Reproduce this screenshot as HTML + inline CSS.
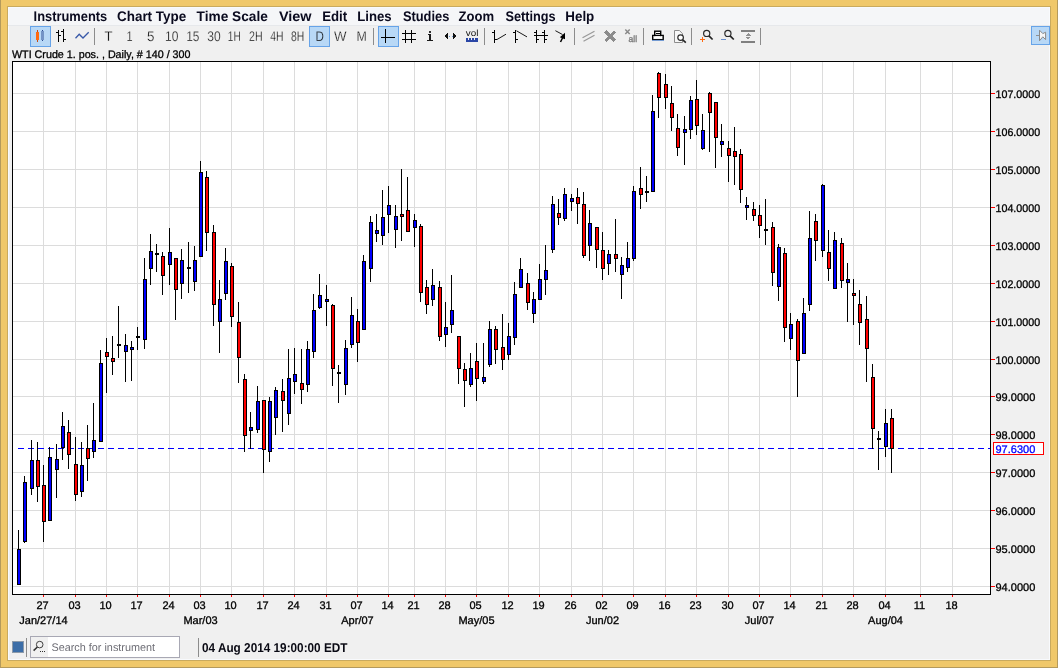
<!DOCTYPE html>
<html><head><meta charset="utf-8"><style>
html,body{margin:0;padding:0;width:1058px;height:668px;overflow:hidden;background:#F0C86A}
svg{display:block;will-change:transform}
</style></head><body>
<svg width="1058" height="668" viewBox="0 0 1058 668" font-family="Liberation Sans, sans-serif" shape-rendering="crispEdges" text-rendering="geometricPrecision">
<rect x="0" y="0" width="1058" height="668" fill="#F0C86A" />
<rect x="0" y="0" width="1" height="668" fill="#B49A5C" />
<rect x="1057" y="0" width="1" height="668" fill="#B49A5C" />
<rect x="0" y="667" width="1058" height="1" fill="#B49A5C" />
<rect x="7" y="6" width="1044" height="655" fill="#C9AA5E" />
<rect x="8" y="7" width="1042" height="653" fill="#F8FAFD" />
<rect x="9" y="8" width="1040" height="651" fill="#F0F0F0" />
<rect x="9" y="8" width="1040" height="17" fill="#F5F6F8" />
<rect x="8" y="25" width="1042" height="1" fill="#E6E8EB" />
<rect x="9" y="26" width="1040" height="22" fill="#F0F0F0" />
<text x="33.6" y="21" font-size="14" font-weight="bold" fill="#0A0A1E" textLength="73.60000000000001" lengthAdjust="spacingAndGlyphs" >Instruments</text>
<text x="117.0" y="21" font-size="14" font-weight="bold" fill="#0A0A1E" textLength="69.2" lengthAdjust="spacingAndGlyphs" >Chart Type</text>
<text x="196.6" y="21" font-size="14" font-weight="bold" fill="#0A0A1E" textLength="71.2" lengthAdjust="spacingAndGlyphs" >Time Scale</text>
<text x="278.90000000000003" y="21" font-size="14" font-weight="bold" fill="#0A0A1E" textLength="32.6" lengthAdjust="spacingAndGlyphs" >View</text>
<text x="322.20000000000005" y="21" font-size="14" font-weight="bold" fill="#0A0A1E" textLength="25.0" lengthAdjust="spacingAndGlyphs" >Edit</text>
<text x="357.3" y="21" font-size="14" font-weight="bold" fill="#0A0A1E" textLength="34.400000000000006" lengthAdjust="spacingAndGlyphs" >Lines</text>
<text x="402.90000000000003" y="21" font-size="14" font-weight="bold" fill="#0A0A1E" textLength="46.5" lengthAdjust="spacingAndGlyphs" >Studies</text>
<text x="458.5" y="21" font-size="14" font-weight="bold" fill="#0A0A1E" textLength="35.6" lengthAdjust="spacingAndGlyphs" >Zoom</text>
<text x="505.40000000000003" y="21" font-size="14" font-weight="bold" fill="#0A0A1E" textLength="50.2" lengthAdjust="spacingAndGlyphs" >Settings</text>
<text x="565.3000000000001" y="21" font-size="14" font-weight="bold" fill="#0A0A1E" textLength="29.0" lengthAdjust="spacingAndGlyphs" >Help</text>
<rect x="30" y="26" width="21" height="21" fill="#66A3E8" />
<rect x="31" y="27" width="19" height="19" fill="#B8D8F6" />
<rect x="37" y="30" width="1" height="12" fill="#C84810" />
<rect x="36" y="32" width="3" height="8" fill="#FF6A10" />
<rect x="42" y="30" width="1" height="11" fill="#2A4A90" />
<rect x="41" y="31" width="3" height="9" rx="1.2" fill="#7494C6"/>
<rect x="58" y="30" width="1" height="12" fill="#000" />
<rect x="63" y="29" width="1" height="13" fill="#000" />
<rect x="56" y="32" width="2" height="1" fill="#000" />
<rect x="59" y="35" width="2" height="1" fill="#000" />
<rect x="61" y="31" width="2" height="1" fill="#000" />
<rect x="64" y="39" width="2" height="1" fill="#000" />
<polyline points="75.5,38.2 79.2,34.3 83,38 88.7,32.3" fill="none" stroke="#3858A8" stroke-width="1.3" shape-rendering="geometricPrecision"/>
<rect x="94" y="28" width="1" height="17" fill="#8C8C8C" />
<rect x="309" y="26" width="21" height="21" fill="#66A3E8" />
<rect x="310" y="27" width="19" height="19" fill="#B8D8F6" />
<text x="104.5" y="41" font-size="14" font-weight="normal" fill="#000" textLength="8.0" lengthAdjust="spacingAndGlyphs" stroke="#F0F0F0" stroke-width="0.3">T</text>
<text x="126.6" y="41" font-size="14" font-weight="normal" fill="#000" textLength="6.1" lengthAdjust="spacingAndGlyphs" stroke="#F0F0F0" stroke-width="0.3">1</text>
<text x="147.1" y="41" font-size="14" font-weight="normal" fill="#000" textLength="7.5" lengthAdjust="spacingAndGlyphs" stroke="#F0F0F0" stroke-width="0.3">5</text>
<text x="165.0" y="41" font-size="14" font-weight="normal" fill="#000" textLength="13.4" lengthAdjust="spacingAndGlyphs" stroke="#F0F0F0" stroke-width="0.3">10</text>
<text x="186.2" y="41" font-size="14" font-weight="normal" fill="#000" textLength="13.3" lengthAdjust="spacingAndGlyphs" stroke="#F0F0F0" stroke-width="0.3">15</text>
<text x="207.3" y="41" font-size="14" font-weight="normal" fill="#000" textLength="13.4" lengthAdjust="spacingAndGlyphs" stroke="#F0F0F0" stroke-width="0.3">30</text>
<text x="227.8" y="41" font-size="14" font-weight="normal" fill="#000" textLength="12.9" lengthAdjust="spacingAndGlyphs" stroke="#F0F0F0" stroke-width="0.3">1H</text>
<text x="249.0" y="41" font-size="14" font-weight="normal" fill="#000" textLength="13.600000000000001" lengthAdjust="spacingAndGlyphs" stroke="#F0F0F0" stroke-width="0.3">2H</text>
<text x="270.2" y="41" font-size="14" font-weight="normal" fill="#000" textLength="13.3" lengthAdjust="spacingAndGlyphs" stroke="#F0F0F0" stroke-width="0.3">4H</text>
<text x="290.9" y="41" font-size="14" font-weight="normal" fill="#000" textLength="13.3" lengthAdjust="spacingAndGlyphs" stroke="#F0F0F0" stroke-width="0.3">8H</text>
<text x="315.5" y="41" font-size="14" font-weight="normal" fill="#000" textLength="8.4" lengthAdjust="spacingAndGlyphs" stroke="#B8D8F6" stroke-width="0.3">D</text>
<text x="334.1" y="41" font-size="14" font-weight="normal" fill="#000" textLength="12.5" lengthAdjust="spacingAndGlyphs" stroke="#F0F0F0" stroke-width="0.3">W</text>
<text x="356.4" y="41" font-size="14" font-weight="normal" fill="#000" textLength="10.3" lengthAdjust="spacingAndGlyphs" stroke="#F0F0F0" stroke-width="0.3">M</text>
<rect x="373" y="28" width="1" height="17" fill="#8C8C8C" />
<rect x="378" y="26" width="21" height="21" fill="#66A3E8" />
<rect x="379" y="27" width="19" height="19" fill="#B8D8F6" />
<rect x="381" y="37" width="14" height="1" fill="#000" />
<rect x="385" y="29" width="1" height="14" fill="#000" />
<rect x="405" y="30" width="1" height="13" fill="#000" />
<rect x="411" y="30" width="1" height="13" fill="#000" />
<rect x="402" y="33" width="14" height="1" fill="#000" />
<rect x="402" y="39" width="14" height="1" fill="#000" />
<rect x="429" y="31" width="2" height="2" fill="#303030" />
<rect x="429" y="34" width="2" height="6" fill="#1a1a1a" />
<rect x="428" y="34" width="1" height="1" fill="#1a1a1a" />
<rect x="427" y="40" width="6" height="1" fill="#1a1a1a" />
<path d="M444,36 L448,33 L448,39 Z M457,36 L453,33 L453,39 Z" fill="#111"/>
<rect x="449" y="36" width="1" height="1" fill="#6A9AD8" />
<rect x="452" y="36" width="1" height="1" fill="#6A9AD8" />
<text x="465.8" y="36" font-size="9" font-weight="normal" fill="#101010" textLength="12.6" lengthAdjust="spacingAndGlyphs" >vol</text>
<path d="M466,38 L467.5,38 L467.5,39.5 L469,39.5 L469,38 L470.5,38 L470.5,39.5 L472,39.5 L472,38 L473.5,38 L473.5,39.5 L475,39.5 L475,38 L478,38 L478,42 L466,42 Z" fill="#2A46A6"/>
<rect x="484" y="28" width="1" height="17" fill="#8C8C8C" />
<g fill="#000"><rect x="494" y="30" width="1" height="13"/><rect x="492" y="32" width="2" height="1"/><rect x="495" y="39" width="2" height="1"/><rect x="515" y="30" width="1" height="13"/><rect x="513" y="32" width="2" height="1"/><rect x="516" y="39" width="2" height="1"/><rect x="536" y="30" width="1" height="13"/><rect x="544" y="30" width="1" height="13"/><rect x="534" y="35" width="14" height="1"/><rect x="534" y="32" width="2" height="1"/><rect x="542" y="32" width="2" height="1"/><rect x="537" y="39" width="2" height="1"/><rect x="545" y="39" width="2" height="1"/></g>
<g stroke="#000" fill="none" shape-rendering="geometricPrecision"><path d="M497,39.5 L506,34.2" stroke-width="0.9"/><path d="M516.5,30.8 L527,36.9" stroke-width="0.9"/><path d="M555.4,30.7 L562.5,34.5" stroke-width="0.9"/><path d="M563,37 L560.5,42" stroke-width="1.6"/></g>
<path d="M565,32.8 L565,39.3 L559.8,37.2 Z" fill="#000" shape-rendering="geometricPrecision"/>
<rect x="574" y="28" width="1" height="17" fill="#8C8C8C" />
<path d="M582.5,37.8 L594.5,31.3 M583.5,41.3 L594.5,35.3" stroke="#9a9a9a" stroke-width="1.3" fill="none" shape-rendering="geometricPrecision"/>
<path d="M605.5,31.5 L615,41 M615,31.5 L605.5,41" stroke="#8C8C8C" stroke-width="3" fill="none"/>
<path d="M625.3,29.5 L629.7,34 M629.7,29.5 L625.3,34" stroke="#8a8a8a" stroke-width="1.5" shape-rendering="geometricPrecision"/>
<text x="628.5" y="42" font-size="9" font-weight="normal" fill="#7c7c7c" textLength="8.6" lengthAdjust="spacingAndGlyphs" stroke="#7c7c7c" stroke-width="0.35" >all</text>
<rect x="643" y="28" width="1" height="17" fill="#8C8C8C" />
<g shape-rendering="geometricPrecision"><rect x="654.7" y="31.2" width="6" height="6.2" fill="#fff" stroke="#000" stroke-width="1.4"/><path d="M652.7,35.4 H663.2 V39.6 H652.7 Z" fill="none" stroke="#000" stroke-width="1.4"/><rect x="654" y="36.2" width="8" height="2.5" fill="#fff"/><rect x="652" y="39.9" width="12" height="1" fill="#6E9AD6"/></g>
<rect x="656" y="33" width="4" height="1" fill="#000" />
<rect x="656" y="35" width="4" height="1" fill="#000" />
<g shape-rendering="geometricPrecision"><path d="M674.5,30.5 h5 l3,3.2 v8.8 h-8 z" fill="#f7f7f7" stroke="#8c8c8c" stroke-width="1"/><circle cx="680.6" cy="37.6" r="2.8" fill="#fff" stroke="#2a2a2a" stroke-width="1.2"/><path d="M682.8,39.8 L685.8,42.6" stroke="#222" stroke-width="1.6"/></g>
<rect x="691" y="28" width="1" height="17" fill="#8C8C8C" />
<g shape-rendering="geometricPrecision"><circle cx="706.7" cy="33.4" r="3.1" fill="none" stroke="#2a2a2a" stroke-width="1.2"/><path d="M708.9,35.8 L712.6,39.5" stroke="#222" stroke-width="1.7"/></g>
<path d="M700,39.4 H705 M702.5,37 V42" stroke="#FF6A10" stroke-width="1.3"/>
<g shape-rendering="geometricPrecision"><circle cx="727.9" cy="33.4" r="3.1" fill="none" stroke="#2a2a2a" stroke-width="1.2"/><path d="M730.1,35.8 L733.8,39.5" stroke="#222" stroke-width="1.7"/></g>
<path d="M721,39.5 H726" stroke="#6A90D0" stroke-width="1.3"/>
<rect x="741" y="30" width="14" height="1.6" fill="#808080" />
<rect x="741" y="41.2" width="14" height="1.6" fill="#808080" />
<path d="M745.5,35.5 L748,33 L750.5,35.5 Z M745.5,37 L748,39.5 L750.5,37 Z" fill="#909090"/>
<rect x="760" y="28" width="1" height="17" fill="#8C8C8C" />
<rect x="1031" y="26" width="19" height="19" fill="#66A3E8" />
<rect x="1032" y="27" width="17" height="17" fill="#B8D8F6" />
<path d="M1036,35.5 H1039.5" stroke="#909090" stroke-width="1"/>
<path d="M1039.5,30.2 L1042.8,33.6 L1045.6,32.2 L1045.6,39.6 L1042.8,36.8 L1039.5,40.8 Z" fill="#f6f6f6" stroke="#8a8a8a" stroke-width="1" shape-rendering="geometricPrecision"/>
<text x="12" y="58" font-size="11" font-weight="normal" fill="#000" textLength="178.5" lengthAdjust="spacingAndGlyphs" stroke="#000" stroke-width="0.3" >WTI Crude 1. pos. , Daily, # 140 / 300</text>
<rect x="12" y="61" width="979" height="534" fill="#000" />
<rect x="13" y="62" width="977" height="532" fill="#FFFFFF" />
<rect x="43" y="62" width="1" height="532" fill="#DCDCDC" />
<rect x="43" y="595" width="1" height="2" fill="#FF0000" />
<rect x="75" y="62" width="1" height="532" fill="#DCDCDC" />
<rect x="75" y="595" width="1" height="2" fill="#FF0000" />
<rect x="106" y="62" width="1" height="532" fill="#DCDCDC" />
<rect x="106" y="595" width="1" height="2" fill="#FF0000" />
<rect x="137" y="62" width="1" height="532" fill="#DCDCDC" />
<rect x="137" y="595" width="1" height="2" fill="#FF0000" />
<rect x="169" y="62" width="1" height="532" fill="#DCDCDC" />
<rect x="169" y="595" width="1" height="2" fill="#FF0000" />
<rect x="200" y="62" width="1" height="532" fill="#DCDCDC" />
<rect x="200" y="595" width="1" height="2" fill="#FF0000" />
<rect x="231" y="62" width="1" height="532" fill="#DCDCDC" />
<rect x="231" y="595" width="1" height="2" fill="#FF0000" />
<rect x="263" y="62" width="1" height="532" fill="#DCDCDC" />
<rect x="263" y="595" width="1" height="2" fill="#FF0000" />
<rect x="294" y="62" width="1" height="532" fill="#DCDCDC" />
<rect x="294" y="595" width="1" height="2" fill="#FF0000" />
<rect x="326" y="62" width="1" height="532" fill="#DCDCDC" />
<rect x="326" y="595" width="1" height="2" fill="#FF0000" />
<rect x="357" y="62" width="1" height="532" fill="#DCDCDC" />
<rect x="357" y="595" width="1" height="2" fill="#FF0000" />
<rect x="388" y="62" width="1" height="532" fill="#DCDCDC" />
<rect x="388" y="595" width="1" height="2" fill="#FF0000" />
<rect x="414" y="62" width="1" height="532" fill="#DCDCDC" />
<rect x="414" y="595" width="1" height="2" fill="#FF0000" />
<rect x="445" y="62" width="1" height="532" fill="#DCDCDC" />
<rect x="445" y="595" width="1" height="2" fill="#FF0000" />
<rect x="476" y="62" width="1" height="532" fill="#DCDCDC" />
<rect x="476" y="595" width="1" height="2" fill="#FF0000" />
<rect x="508" y="62" width="1" height="532" fill="#DCDCDC" />
<rect x="508" y="595" width="1" height="2" fill="#FF0000" />
<rect x="539" y="62" width="1" height="532" fill="#DCDCDC" />
<rect x="539" y="595" width="1" height="2" fill="#FF0000" />
<rect x="571" y="62" width="1" height="532" fill="#DCDCDC" />
<rect x="571" y="595" width="1" height="2" fill="#FF0000" />
<rect x="602" y="62" width="1" height="532" fill="#DCDCDC" />
<rect x="602" y="595" width="1" height="2" fill="#FF0000" />
<rect x="633" y="62" width="1" height="532" fill="#DCDCDC" />
<rect x="633" y="595" width="1" height="2" fill="#FF0000" />
<rect x="665" y="62" width="1" height="532" fill="#DCDCDC" />
<rect x="665" y="595" width="1" height="2" fill="#FF0000" />
<rect x="696" y="62" width="1" height="532" fill="#DCDCDC" />
<rect x="696" y="595" width="1" height="2" fill="#FF0000" />
<rect x="728" y="62" width="1" height="532" fill="#DCDCDC" />
<rect x="728" y="595" width="1" height="2" fill="#FF0000" />
<rect x="759" y="62" width="1" height="532" fill="#DCDCDC" />
<rect x="759" y="595" width="1" height="2" fill="#FF0000" />
<rect x="790" y="62" width="1" height="532" fill="#DCDCDC" />
<rect x="790" y="595" width="1" height="2" fill="#FF0000" />
<rect x="822" y="62" width="1" height="532" fill="#DCDCDC" />
<rect x="822" y="595" width="1" height="2" fill="#FF0000" />
<rect x="853" y="62" width="1" height="532" fill="#DCDCDC" />
<rect x="853" y="595" width="1" height="2" fill="#FF0000" />
<rect x="885" y="62" width="1" height="532" fill="#DCDCDC" />
<rect x="885" y="595" width="1" height="2" fill="#FF0000" />
<rect x="920" y="62" width="1" height="532" fill="#DCDCDC" />
<rect x="920" y="595" width="1" height="2" fill="#FF0000" />
<rect x="952" y="62" width="1" height="532" fill="#DCDCDC" />
<rect x="952" y="595" width="1" height="2" fill="#FF0000" />
<rect x="13" y="586" width="977" height="1" fill="#DCDCDC" />
<rect x="991" y="586" width="4" height="1" fill="#FF0000" />
<rect x="13" y="548" width="977" height="1" fill="#DCDCDC" />
<rect x="991" y="548" width="4" height="1" fill="#FF0000" />
<rect x="13" y="510" width="977" height="1" fill="#DCDCDC" />
<rect x="991" y="510" width="4" height="1" fill="#FF0000" />
<rect x="13" y="472" width="977" height="1" fill="#DCDCDC" />
<rect x="991" y="472" width="4" height="1" fill="#FF0000" />
<rect x="13" y="434" width="977" height="1" fill="#DCDCDC" />
<rect x="991" y="434" width="4" height="1" fill="#FF0000" />
<rect x="13" y="396" width="977" height="1" fill="#DCDCDC" />
<rect x="991" y="396" width="4" height="1" fill="#FF0000" />
<rect x="13" y="359" width="977" height="1" fill="#DCDCDC" />
<rect x="991" y="359" width="4" height="1" fill="#FF0000" />
<rect x="13" y="321" width="977" height="1" fill="#DCDCDC" />
<rect x="991" y="321" width="4" height="1" fill="#FF0000" />
<rect x="13" y="283" width="977" height="1" fill="#DCDCDC" />
<rect x="991" y="283" width="4" height="1" fill="#FF0000" />
<rect x="13" y="245" width="977" height="1" fill="#DCDCDC" />
<rect x="991" y="245" width="4" height="1" fill="#FF0000" />
<rect x="13" y="207" width="977" height="1" fill="#DCDCDC" />
<rect x="991" y="207" width="4" height="1" fill="#FF0000" />
<rect x="13" y="169" width="977" height="1" fill="#DCDCDC" />
<rect x="991" y="169" width="4" height="1" fill="#FF0000" />
<rect x="13" y="131" width="977" height="1" fill="#DCDCDC" />
<rect x="991" y="131" width="4" height="1" fill="#FF0000" />
<rect x="13" y="93" width="977" height="1" fill="#DCDCDC" />
<rect x="991" y="93" width="4" height="1" fill="#FF0000" />
<text x="995.5" y="591" font-size="11" font-weight="normal" fill="#000" stroke="#000" stroke-width="0.3" >94.0000</text>
<text x="995.5" y="553" font-size="11" font-weight="normal" fill="#000" stroke="#000" stroke-width="0.3" >95.0000</text>
<text x="995.5" y="515" font-size="11" font-weight="normal" fill="#000" stroke="#000" stroke-width="0.3" >96.0000</text>
<text x="995.5" y="477" font-size="11" font-weight="normal" fill="#000" stroke="#000" stroke-width="0.3" >97.0000</text>
<text x="995.5" y="439" font-size="11" font-weight="normal" fill="#000" stroke="#000" stroke-width="0.3" >98.0000</text>
<text x="995.5" y="401" font-size="11" font-weight="normal" fill="#000" stroke="#000" stroke-width="0.3" >99.0000</text>
<text x="995.5" y="364" font-size="11" font-weight="normal" fill="#000" textLength="44.6" lengthAdjust="spacingAndGlyphs" stroke="#000" stroke-width="0.3" >100.0000</text>
<text x="995.5" y="326" font-size="11" font-weight="normal" fill="#000" textLength="44.6" lengthAdjust="spacingAndGlyphs" stroke="#000" stroke-width="0.3" >101.0000</text>
<text x="995.5" y="288" font-size="11" font-weight="normal" fill="#000" textLength="44.6" lengthAdjust="spacingAndGlyphs" stroke="#000" stroke-width="0.3" >102.0000</text>
<text x="995.5" y="250" font-size="11" font-weight="normal" fill="#000" textLength="44.6" lengthAdjust="spacingAndGlyphs" stroke="#000" stroke-width="0.3" >103.0000</text>
<text x="995.5" y="212" font-size="11" font-weight="normal" fill="#000" textLength="44.6" lengthAdjust="spacingAndGlyphs" stroke="#000" stroke-width="0.3" >104.0000</text>
<text x="995.5" y="174" font-size="11" font-weight="normal" fill="#000" textLength="44.6" lengthAdjust="spacingAndGlyphs" stroke="#000" stroke-width="0.3" >105.0000</text>
<text x="995.5" y="136" font-size="11" font-weight="normal" fill="#000" textLength="44.6" lengthAdjust="spacingAndGlyphs" stroke="#000" stroke-width="0.3" >106.0000</text>
<text x="995.5" y="98" font-size="11" font-weight="normal" fill="#000" textLength="44.6" lengthAdjust="spacingAndGlyphs" stroke="#000" stroke-width="0.3" >107.0000</text>
<path d="M18,448.5 H990" stroke="#0000FF" stroke-width="1" stroke-dasharray="6 4"/>
<rect x="18" y="530" width="1" height="55" fill="#000" />
<rect x="17" y="549" width="4" height="36" fill="#000" />
<rect x="18" y="550" width="2" height="34" fill="#0000FF" />
<rect x="24" y="476" width="1" height="67" fill="#000" />
<rect x="23" y="482" width="4" height="60" fill="#000" />
<rect x="24" y="483" width="2" height="58" fill="#0000FF" />
<rect x="31" y="440" width="1" height="55" fill="#000" />
<rect x="30" y="460" width="4" height="29" fill="#000" />
<rect x="31" y="461" width="2" height="27" fill="#0000FF" />
<rect x="37" y="442" width="1" height="60" fill="#000" />
<rect x="36" y="460" width="4" height="27" fill="#000" />
<rect x="37" y="461" width="2" height="25" fill="#FF0000" />
<rect x="43" y="465" width="1" height="77" fill="#000" />
<rect x="42" y="485" width="4" height="37" fill="#000" />
<rect x="43" y="486" width="2" height="35" fill="#FF0000" />
<rect x="49" y="447" width="1" height="74" fill="#000" />
<rect x="48" y="457" width="4" height="64" fill="#000" />
<rect x="49" y="458" width="2" height="62" fill="#0000FF" />
<rect x="56" y="444" width="1" height="54" fill="#000" />
<rect x="55" y="459" width="4" height="11" fill="#000" />
<rect x="56" y="460" width="2" height="9" fill="#0000FF" />
<rect x="62" y="412" width="1" height="48" fill="#000" />
<rect x="61" y="426" width="4" height="22" fill="#000" />
<rect x="62" y="427" width="2" height="20" fill="#0000FF" />
<rect x="68" y="420" width="1" height="49" fill="#000" />
<rect x="67" y="432" width="4" height="23" fill="#000" />
<rect x="68" y="433" width="2" height="21" fill="#FF0000" />
<rect x="75" y="437" width="1" height="64" fill="#000" />
<rect x="74" y="464" width="4" height="31" fill="#000" />
<rect x="75" y="465" width="2" height="29" fill="#FF0000" />
<rect x="81" y="442" width="1" height="55" fill="#000" />
<rect x="80" y="465" width="4" height="27" fill="#000" />
<rect x="81" y="466" width="2" height="25" fill="#0000FF" />
<rect x="87" y="425" width="1" height="56" fill="#000" />
<rect x="86" y="448" width="4" height="11" fill="#000" />
<rect x="87" y="449" width="2" height="9" fill="#FF0000" />
<rect x="93" y="403" width="1" height="55" fill="#000" />
<rect x="92" y="440" width="4" height="12" fill="#000" />
<rect x="93" y="441" width="2" height="10" fill="#0000FF" />
<rect x="100" y="350" width="1" height="92" fill="#000" />
<rect x="99" y="363" width="4" height="79" fill="#000" />
<rect x="100" y="364" width="2" height="77" fill="#0000FF" />
<rect x="106" y="338" width="1" height="55" fill="#000" />
<rect x="105" y="352" width="4" height="5" fill="#000" />
<rect x="106" y="353" width="2" height="3" fill="#FF0000" />
<rect x="112" y="336" width="1" height="39" fill="#000" />
<rect x="111" y="358" width="4" height="4" fill="#000" />
<rect x="112" y="359" width="2" height="2" fill="#FF0000" />
<rect x="118" y="306" width="1" height="52" fill="#000" />
<rect x="117" y="344" width="4" height="2" fill="#000" />
<rect x="125" y="334" width="1" height="48" fill="#000" />
<rect x="124" y="345" width="4" height="7" fill="#000" />
<rect x="125" y="346" width="2" height="5" fill="#0000FF" />
<rect x="131" y="341" width="1" height="40" fill="#000" />
<rect x="130" y="347" width="4" height="3" fill="#000" />
<rect x="131" y="348" width="2" height="1" fill="#0000FF" />
<rect x="137" y="327" width="1" height="23" fill="#000" />
<rect x="136" y="336" width="4" height="2" fill="#000" />
<rect x="144" y="258" width="1" height="91" fill="#000" />
<rect x="143" y="279" width="4" height="61" fill="#000" />
<rect x="144" y="280" width="2" height="59" fill="#0000FF" />
<rect x="150" y="234" width="1" height="51" fill="#000" />
<rect x="149" y="251" width="4" height="18" fill="#000" />
<rect x="150" y="252" width="2" height="16" fill="#0000FF" />
<rect x="156" y="244" width="1" height="28" fill="#000" />
<rect x="155" y="253" width="4" height="2" fill="#000" />
<rect x="162" y="252" width="1" height="43" fill="#000" />
<rect x="161" y="256" width="4" height="20" fill="#000" />
<rect x="162" y="257" width="2" height="18" fill="#FF0000" />
<rect x="169" y="228" width="1" height="57" fill="#000" />
<rect x="168" y="252" width="4" height="13" fill="#000" />
<rect x="169" y="253" width="2" height="11" fill="#0000FF" />
<rect x="175" y="258" width="1" height="62" fill="#000" />
<rect x="174" y="258" width="4" height="32" fill="#000" />
<rect x="175" y="259" width="2" height="30" fill="#FF0000" />
<rect x="181" y="249" width="1" height="50" fill="#000" />
<rect x="180" y="260" width="4" height="24" fill="#000" />
<rect x="181" y="261" width="2" height="22" fill="#0000FF" />
<rect x="188" y="242" width="1" height="51" fill="#000" />
<rect x="187" y="267" width="4" height="2" fill="#000" />
<rect x="194" y="246" width="1" height="45" fill="#000" />
<rect x="193" y="260" width="4" height="22" fill="#000" />
<rect x="194" y="261" width="2" height="20" fill="#0000FF" />
<rect x="200" y="161" width="1" height="96" fill="#000" />
<rect x="199" y="172" width="4" height="85" fill="#000" />
<rect x="200" y="173" width="2" height="83" fill="#0000FF" />
<rect x="206" y="171" width="1" height="80" fill="#000" />
<rect x="205" y="177" width="4" height="56" fill="#000" />
<rect x="206" y="178" width="2" height="54" fill="#FF0000" />
<rect x="213" y="225" width="1" height="101" fill="#000" />
<rect x="212" y="232" width="4" height="73" fill="#000" />
<rect x="213" y="233" width="2" height="71" fill="#FF0000" />
<rect x="219" y="280" width="1" height="73" fill="#000" />
<rect x="218" y="299" width="4" height="23" fill="#000" />
<rect x="219" y="300" width="2" height="21" fill="#0000FF" />
<rect x="225" y="248" width="1" height="52" fill="#000" />
<rect x="224" y="261" width="4" height="33" fill="#000" />
<rect x="225" y="262" width="2" height="31" fill="#0000FF" />
<rect x="231" y="263" width="1" height="64" fill="#000" />
<rect x="230" y="266" width="4" height="51" fill="#000" />
<rect x="231" y="267" width="2" height="49" fill="#FF0000" />
<rect x="238" y="302" width="1" height="81" fill="#000" />
<rect x="237" y="322" width="4" height="36" fill="#000" />
<rect x="238" y="323" width="2" height="34" fill="#FF0000" />
<rect x="244" y="374" width="1" height="78" fill="#000" />
<rect x="243" y="379" width="4" height="57" fill="#000" />
<rect x="244" y="380" width="2" height="55" fill="#FF0000" />
<rect x="250" y="412" width="1" height="37" fill="#000" />
<rect x="249" y="427" width="4" height="4" fill="#000" />
<rect x="250" y="428" width="2" height="2" fill="#0000FF" />
<rect x="257" y="386" width="1" height="47" fill="#000" />
<rect x="256" y="401" width="4" height="29" fill="#000" />
<rect x="257" y="402" width="2" height="27" fill="#0000FF" />
<rect x="263" y="400" width="1" height="73" fill="#000" />
<rect x="262" y="400" width="4" height="50" fill="#000" />
<rect x="263" y="401" width="2" height="48" fill="#FF0000" />
<rect x="269" y="397" width="1" height="65" fill="#000" />
<rect x="268" y="401" width="4" height="51" fill="#000" />
<rect x="269" y="402" width="2" height="49" fill="#0000FF" />
<rect x="275" y="387" width="1" height="48" fill="#000" />
<rect x="274" y="390" width="4" height="28" fill="#000" />
<rect x="275" y="391" width="2" height="26" fill="#0000FF" />
<rect x="282" y="379" width="1" height="53" fill="#000" />
<rect x="281" y="391" width="4" height="10" fill="#000" />
<rect x="282" y="392" width="2" height="8" fill="#FF0000" />
<rect x="288" y="349" width="1" height="76" fill="#000" />
<rect x="287" y="378" width="4" height="36" fill="#000" />
<rect x="288" y="379" width="2" height="34" fill="#0000FF" />
<rect x="294" y="348" width="1" height="46" fill="#000" />
<rect x="293" y="374" width="4" height="8" fill="#000" />
<rect x="294" y="375" width="2" height="6" fill="#0000FF" />
<rect x="301" y="349" width="1" height="55" fill="#000" />
<rect x="300" y="383" width="4" height="7" fill="#000" />
<rect x="301" y="384" width="2" height="5" fill="#FF0000" />
<rect x="307" y="341" width="1" height="51" fill="#000" />
<rect x="306" y="349" width="4" height="36" fill="#000" />
<rect x="307" y="350" width="2" height="34" fill="#0000FF" />
<rect x="313" y="294" width="1" height="64" fill="#000" />
<rect x="312" y="310" width="4" height="42" fill="#000" />
<rect x="313" y="311" width="2" height="40" fill="#0000FF" />
<rect x="319" y="274" width="1" height="35" fill="#000" />
<rect x="318" y="295" width="4" height="13" fill="#000" />
<rect x="319" y="296" width="2" height="11" fill="#0000FF" />
<rect x="326" y="285" width="1" height="41" fill="#000" />
<rect x="325" y="299" width="4" height="3" fill="#000" />
<rect x="326" y="300" width="2" height="1" fill="#0000FF" />
<rect x="332" y="304" width="1" height="82" fill="#000" />
<rect x="331" y="305" width="4" height="64" fill="#000" />
<rect x="332" y="306" width="2" height="62" fill="#FF0000" />
<rect x="338" y="365" width="1" height="38" fill="#000" />
<rect x="337" y="372" width="4" height="2" fill="#000" />
<rect x="345" y="340" width="1" height="55" fill="#000" />
<rect x="344" y="348" width="4" height="37" fill="#000" />
<rect x="345" y="349" width="2" height="35" fill="#0000FF" />
<rect x="351" y="297" width="1" height="51" fill="#000" />
<rect x="350" y="315" width="4" height="30" fill="#000" />
<rect x="351" y="316" width="2" height="28" fill="#0000FF" />
<rect x="357" y="309" width="1" height="53" fill="#000" />
<rect x="356" y="321" width="4" height="22" fill="#000" />
<rect x="357" y="322" width="2" height="20" fill="#FF0000" />
<rect x="363" y="255" width="1" height="75" fill="#000" />
<rect x="362" y="261" width="4" height="69" fill="#000" />
<rect x="363" y="262" width="2" height="67" fill="#0000FF" />
<rect x="370" y="216" width="1" height="66" fill="#000" />
<rect x="369" y="222" width="4" height="47" fill="#000" />
<rect x="370" y="223" width="2" height="45" fill="#0000FF" />
<rect x="376" y="214" width="1" height="28" fill="#000" />
<rect x="375" y="230" width="4" height="4" fill="#000" />
<rect x="376" y="231" width="2" height="2" fill="#0000FF" />
<rect x="382" y="190" width="1" height="55" fill="#000" />
<rect x="381" y="217" width="4" height="19" fill="#000" />
<rect x="382" y="218" width="2" height="17" fill="#0000FF" />
<rect x="388" y="186" width="1" height="47" fill="#000" />
<rect x="387" y="205" width="4" height="10" fill="#000" />
<rect x="388" y="206" width="2" height="8" fill="#0000FF" />
<rect x="395" y="205" width="1" height="43" fill="#000" />
<rect x="394" y="216" width="4" height="14" fill="#000" />
<rect x="395" y="217" width="2" height="12" fill="#0000FF" />
<rect x="401" y="169" width="1" height="72" fill="#000" />
<rect x="400" y="214" width="4" height="3" fill="#000" />
<rect x="401" y="215" width="2" height="1" fill="#FF0000" />
<rect x="407" y="177" width="1" height="55" fill="#000" />
<rect x="406" y="210" width="4" height="22" fill="#000" />
<rect x="407" y="211" width="2" height="20" fill="#FF0000" />
<rect x="414" y="214" width="1" height="33" fill="#000" />
<rect x="413" y="220" width="4" height="8" fill="#000" />
<rect x="414" y="221" width="2" height="6" fill="#0000FF" />
<rect x="420" y="224" width="1" height="78" fill="#000" />
<rect x="419" y="226" width="4" height="67" fill="#000" />
<rect x="420" y="227" width="2" height="65" fill="#FF0000" />
<rect x="426" y="280" width="1" height="34" fill="#000" />
<rect x="425" y="287" width="4" height="18" fill="#000" />
<rect x="426" y="288" width="2" height="16" fill="#FF0000" />
<rect x="432" y="269" width="1" height="37" fill="#000" />
<rect x="431" y="285" width="4" height="15" fill="#000" />
<rect x="432" y="286" width="2" height="13" fill="#0000FF" />
<rect x="439" y="281" width="1" height="60" fill="#000" />
<rect x="438" y="287" width="4" height="50" fill="#000" />
<rect x="439" y="288" width="2" height="48" fill="#FF0000" />
<rect x="445" y="302" width="1" height="45" fill="#000" />
<rect x="444" y="327" width="4" height="8" fill="#000" />
<rect x="445" y="328" width="2" height="6" fill="#0000FF" />
<rect x="451" y="275" width="1" height="58" fill="#000" />
<rect x="450" y="310" width="4" height="15" fill="#000" />
<rect x="451" y="311" width="2" height="13" fill="#0000FF" />
<rect x="458" y="336" width="1" height="48" fill="#000" />
<rect x="457" y="336" width="4" height="33" fill="#000" />
<rect x="458" y="337" width="2" height="31" fill="#FF0000" />
<rect x="464" y="363" width="1" height="44" fill="#000" />
<rect x="463" y="369" width="4" height="12" fill="#000" />
<rect x="464" y="370" width="2" height="10" fill="#FF0000" />
<rect x="470" y="353" width="1" height="34" fill="#000" />
<rect x="469" y="368" width="4" height="17" fill="#000" />
<rect x="470" y="369" width="2" height="15" fill="#0000FF" />
<rect x="476" y="343" width="1" height="58" fill="#000" />
<rect x="475" y="361" width="4" height="18" fill="#000" />
<rect x="476" y="362" width="2" height="16" fill="#FF0000" />
<rect x="483" y="343" width="1" height="41" fill="#000" />
<rect x="482" y="377" width="4" height="5" fill="#000" />
<rect x="483" y="378" width="2" height="3" fill="#0000FF" />
<rect x="489" y="321" width="1" height="46" fill="#000" />
<rect x="488" y="329" width="4" height="36" fill="#000" />
<rect x="489" y="330" width="2" height="34" fill="#0000FF" />
<rect x="495" y="326" width="1" height="38" fill="#000" />
<rect x="494" y="329" width="4" height="21" fill="#000" />
<rect x="495" y="330" width="2" height="19" fill="#FF0000" />
<rect x="502" y="314" width="1" height="56" fill="#000" />
<rect x="501" y="347" width="4" height="13" fill="#000" />
<rect x="502" y="348" width="2" height="11" fill="#FF0000" />
<rect x="508" y="323" width="1" height="37" fill="#000" />
<rect x="507" y="336" width="4" height="19" fill="#000" />
<rect x="508" y="337" width="2" height="17" fill="#0000FF" />
<rect x="514" y="282" width="1" height="63" fill="#000" />
<rect x="513" y="294" width="4" height="44" fill="#000" />
<rect x="514" y="295" width="2" height="42" fill="#0000FF" />
<rect x="520" y="258" width="1" height="30" fill="#000" />
<rect x="519" y="269" width="4" height="19" fill="#000" />
<rect x="520" y="270" width="2" height="17" fill="#0000FF" />
<rect x="527" y="273" width="1" height="37" fill="#000" />
<rect x="526" y="283" width="4" height="20" fill="#000" />
<rect x="527" y="284" width="2" height="18" fill="#FF0000" />
<rect x="533" y="292" width="1" height="31" fill="#000" />
<rect x="532" y="299" width="4" height="15" fill="#000" />
<rect x="533" y="300" width="2" height="13" fill="#0000FF" />
<rect x="539" y="264" width="1" height="36" fill="#000" />
<rect x="538" y="279" width="4" height="21" fill="#000" />
<rect x="539" y="280" width="2" height="19" fill="#0000FF" />
<rect x="545" y="245" width="1" height="50" fill="#000" />
<rect x="544" y="270" width="4" height="10" fill="#000" />
<rect x="545" y="271" width="2" height="8" fill="#0000FF" />
<rect x="552" y="196" width="1" height="57" fill="#000" />
<rect x="551" y="204" width="4" height="46" fill="#000" />
<rect x="552" y="205" width="2" height="44" fill="#0000FF" />
<rect x="558" y="199" width="1" height="26" fill="#000" />
<rect x="557" y="213" width="4" height="5" fill="#000" />
<rect x="558" y="214" width="2" height="3" fill="#FF0000" />
<rect x="564" y="188" width="1" height="33" fill="#000" />
<rect x="563" y="194" width="4" height="25" fill="#000" />
<rect x="564" y="195" width="2" height="23" fill="#0000FF" />
<rect x="571" y="194" width="1" height="17" fill="#000" />
<rect x="570" y="198" width="4" height="4" fill="#000" />
<rect x="571" y="199" width="2" height="2" fill="#0000FF" />
<rect x="577" y="188" width="1" height="36" fill="#000" />
<rect x="576" y="197" width="4" height="7" fill="#000" />
<rect x="577" y="198" width="2" height="5" fill="#FF0000" />
<rect x="583" y="192" width="1" height="66" fill="#000" />
<rect x="582" y="204" width="4" height="52" fill="#000" />
<rect x="583" y="205" width="2" height="50" fill="#FF0000" />
<rect x="589" y="210" width="1" height="51" fill="#000" />
<rect x="588" y="223" width="4" height="23" fill="#000" />
<rect x="589" y="224" width="2" height="21" fill="#0000FF" />
<rect x="596" y="227" width="1" height="41" fill="#000" />
<rect x="595" y="227" width="4" height="23" fill="#000" />
<rect x="596" y="228" width="2" height="21" fill="#FF0000" />
<rect x="602" y="232" width="1" height="48" fill="#000" />
<rect x="601" y="250" width="4" height="19" fill="#000" />
<rect x="602" y="251" width="2" height="17" fill="#FF0000" />
<rect x="608" y="250" width="1" height="25" fill="#000" />
<rect x="607" y="254" width="4" height="10" fill="#000" />
<rect x="608" y="255" width="2" height="8" fill="#0000FF" />
<rect x="615" y="219" width="1" height="53" fill="#000" />
<rect x="614" y="254" width="4" height="5" fill="#000" />
<rect x="615" y="255" width="2" height="3" fill="#FF0000" />
<rect x="621" y="257" width="1" height="42" fill="#000" />
<rect x="620" y="265" width="4" height="10" fill="#000" />
<rect x="621" y="266" width="2" height="8" fill="#0000FF" />
<rect x="627" y="242" width="1" height="30" fill="#000" />
<rect x="626" y="258" width="4" height="10" fill="#000" />
<rect x="627" y="259" width="2" height="8" fill="#0000FF" />
<rect x="633" y="186" width="1" height="75" fill="#000" />
<rect x="632" y="191" width="4" height="68" fill="#000" />
<rect x="633" y="192" width="2" height="66" fill="#0000FF" />
<rect x="640" y="167" width="1" height="42" fill="#000" />
<rect x="639" y="188" width="4" height="7" fill="#000" />
<rect x="640" y="189" width="2" height="5" fill="#FF0000" />
<rect x="646" y="176" width="1" height="26" fill="#000" />
<rect x="645" y="191" width="4" height="2" fill="#000" />
<rect x="652" y="95" width="1" height="97" fill="#000" />
<rect x="651" y="111" width="4" height="81" fill="#000" />
<rect x="652" y="112" width="2" height="79" fill="#0000FF" />
<rect x="658" y="72" width="1" height="46" fill="#000" />
<rect x="657" y="73" width="4" height="25" fill="#000" />
<rect x="658" y="74" width="2" height="23" fill="#FF0000" />
<rect x="665" y="74" width="1" height="35" fill="#000" />
<rect x="664" y="84" width="4" height="14" fill="#000" />
<rect x="665" y="85" width="2" height="12" fill="#FF0000" />
<rect x="671" y="86" width="1" height="45" fill="#000" />
<rect x="670" y="103" width="4" height="15" fill="#000" />
<rect x="671" y="104" width="2" height="13" fill="#FF0000" />
<rect x="677" y="114" width="1" height="42" fill="#000" />
<rect x="676" y="128" width="4" height="20" fill="#000" />
<rect x="677" y="129" width="2" height="18" fill="#FF0000" />
<rect x="684" y="116" width="1" height="49" fill="#000" />
<rect x="683" y="129" width="4" height="4" fill="#000" />
<rect x="684" y="130" width="2" height="2" fill="#0000FF" />
<rect x="690" y="96" width="1" height="43" fill="#000" />
<rect x="689" y="100" width="4" height="30" fill="#000" />
<rect x="690" y="101" width="2" height="28" fill="#0000FF" />
<rect x="696" y="80" width="1" height="55" fill="#000" />
<rect x="695" y="99" width="4" height="27" fill="#000" />
<rect x="696" y="100" width="2" height="25" fill="#FF0000" />
<rect x="702" y="114" width="1" height="36" fill="#000" />
<rect x="701" y="130" width="4" height="19" fill="#000" />
<rect x="702" y="131" width="2" height="17" fill="#0000FF" />
<rect x="709" y="92" width="1" height="60" fill="#000" />
<rect x="708" y="93" width="4" height="20" fill="#000" />
<rect x="709" y="94" width="2" height="18" fill="#FF0000" />
<rect x="715" y="102" width="1" height="66" fill="#000" />
<rect x="714" y="102" width="4" height="36" fill="#000" />
<rect x="715" y="103" width="2" height="34" fill="#FF0000" />
<rect x="721" y="124" width="1" height="33" fill="#000" />
<rect x="720" y="141" width="4" height="4" fill="#000" />
<rect x="721" y="142" width="2" height="2" fill="#0000FF" />
<rect x="728" y="141" width="1" height="41" fill="#000" />
<rect x="727" y="148" width="4" height="8" fill="#000" />
<rect x="728" y="149" width="2" height="6" fill="#FF0000" />
<rect x="734" y="127" width="1" height="58" fill="#000" />
<rect x="733" y="151" width="4" height="6" fill="#000" />
<rect x="734" y="152" width="2" height="4" fill="#FF0000" />
<rect x="740" y="149" width="1" height="54" fill="#000" />
<rect x="739" y="154" width="4" height="36" fill="#000" />
<rect x="740" y="155" width="2" height="34" fill="#FF0000" />
<rect x="746" y="197" width="1" height="23" fill="#000" />
<rect x="745" y="205" width="4" height="3" fill="#000" />
<rect x="746" y="206" width="2" height="1" fill="#0000FF" />
<rect x="753" y="202" width="1" height="19" fill="#000" />
<rect x="752" y="209" width="4" height="7" fill="#000" />
<rect x="753" y="210" width="2" height="5" fill="#FF0000" />
<rect x="759" y="205" width="1" height="33" fill="#000" />
<rect x="758" y="215" width="4" height="11" fill="#000" />
<rect x="759" y="216" width="2" height="9" fill="#FF0000" />
<rect x="765" y="199" width="1" height="46" fill="#000" />
<rect x="764" y="229" width="4" height="2" fill="#000" />
<rect x="772" y="222" width="1" height="64" fill="#000" />
<rect x="771" y="227" width="4" height="46" fill="#000" />
<rect x="772" y="228" width="2" height="44" fill="#FF0000" />
<rect x="778" y="244" width="1" height="57" fill="#000" />
<rect x="777" y="247" width="4" height="40" fill="#000" />
<rect x="778" y="248" width="2" height="38" fill="#0000FF" />
<rect x="784" y="248" width="1" height="94" fill="#000" />
<rect x="783" y="253" width="4" height="75" fill="#000" />
<rect x="784" y="254" width="2" height="73" fill="#FF0000" />
<rect x="790" y="313" width="1" height="37" fill="#000" />
<rect x="789" y="324" width="4" height="15" fill="#000" />
<rect x="790" y="325" width="2" height="13" fill="#0000FF" />
<rect x="797" y="319" width="1" height="78" fill="#000" />
<rect x="796" y="321" width="4" height="40" fill="#000" />
<rect x="797" y="322" width="2" height="38" fill="#FF0000" />
<rect x="803" y="298" width="1" height="56" fill="#000" />
<rect x="802" y="313" width="4" height="41" fill="#000" />
<rect x="803" y="314" width="2" height="39" fill="#0000FF" />
<rect x="809" y="211" width="1" height="100" fill="#000" />
<rect x="808" y="238" width="4" height="67" fill="#000" />
<rect x="809" y="239" width="2" height="65" fill="#0000FF" />
<rect x="815" y="214" width="1" height="47" fill="#000" />
<rect x="814" y="221" width="4" height="20" fill="#000" />
<rect x="815" y="222" width="2" height="18" fill="#FF0000" />
<rect x="822" y="184" width="1" height="73" fill="#000" />
<rect x="821" y="185" width="4" height="66" fill="#000" />
<rect x="822" y="186" width="2" height="64" fill="#0000FF" />
<rect x="828" y="230" width="1" height="51" fill="#000" />
<rect x="827" y="252" width="4" height="17" fill="#000" />
<rect x="828" y="253" width="2" height="15" fill="#FF0000" />
<rect x="834" y="232" width="1" height="57" fill="#000" />
<rect x="833" y="240" width="4" height="49" fill="#000" />
<rect x="834" y="241" width="2" height="47" fill="#0000FF" />
<rect x="841" y="238" width="1" height="50" fill="#000" />
<rect x="840" y="243" width="4" height="38" fill="#000" />
<rect x="841" y="244" width="2" height="36" fill="#FF0000" />
<rect x="847" y="263" width="1" height="59" fill="#000" />
<rect x="846" y="279" width="4" height="4" fill="#000" />
<rect x="847" y="280" width="2" height="2" fill="#0000FF" />
<rect x="853" y="279" width="1" height="46" fill="#000" />
<rect x="852" y="293" width="4" height="3" fill="#000" />
<rect x="853" y="294" width="2" height="1" fill="#FF0000" />
<rect x="859" y="290" width="1" height="55" fill="#000" />
<rect x="858" y="304" width="4" height="19" fill="#000" />
<rect x="859" y="305" width="2" height="17" fill="#FF0000" />
<rect x="866" y="296" width="1" height="86" fill="#000" />
<rect x="865" y="319" width="4" height="30" fill="#000" />
<rect x="866" y="320" width="2" height="28" fill="#FF0000" />
<rect x="872" y="364" width="1" height="85" fill="#000" />
<rect x="871" y="377" width="4" height="52" fill="#000" />
<rect x="872" y="378" width="2" height="50" fill="#FF0000" />
<rect x="878" y="431" width="1" height="39" fill="#000" />
<rect x="877" y="438" width="4" height="2" fill="#000" />
<rect x="885" y="409" width="1" height="48" fill="#000" />
<rect x="884" y="423" width="4" height="24" fill="#000" />
<rect x="885" y="424" width="2" height="22" fill="#0000FF" />
<rect x="891" y="409" width="1" height="64" fill="#000" />
<rect x="890" y="418" width="4" height="31" fill="#000" />
<rect x="891" y="419" width="2" height="29" fill="#FF0000" />
<rect x="993" y="442" width="51" height="13" fill="#FF0000" />
<rect x="994" y="443" width="49" height="11" fill="#FFFFFF" />
<text x="995.5" y="453" font-size="11" font-weight="normal" fill="#0000FF" stroke="#0000FF" stroke-width="0.3" >97.6300</text>
<text x="42.5" y="609" font-size="11" font-weight="normal" fill="#000" text-anchor="middle" stroke="#000" stroke-width="0.3" >27</text>
<text x="74.5" y="609" font-size="11" font-weight="normal" fill="#000" text-anchor="middle" stroke="#000" stroke-width="0.3" >03</text>
<text x="105.5" y="609" font-size="11" font-weight="normal" fill="#000" text-anchor="middle" stroke="#000" stroke-width="0.3" >10</text>
<text x="136.5" y="609" font-size="11" font-weight="normal" fill="#000" text-anchor="middle" stroke="#000" stroke-width="0.3" >17</text>
<text x="168.5" y="609" font-size="11" font-weight="normal" fill="#000" text-anchor="middle" stroke="#000" stroke-width="0.3" >24</text>
<text x="199.5" y="609" font-size="11" font-weight="normal" fill="#000" text-anchor="middle" stroke="#000" stroke-width="0.3" >03</text>
<text x="230.5" y="609" font-size="11" font-weight="normal" fill="#000" text-anchor="middle" stroke="#000" stroke-width="0.3" >10</text>
<text x="262.5" y="609" font-size="11" font-weight="normal" fill="#000" text-anchor="middle" stroke="#000" stroke-width="0.3" >17</text>
<text x="293.5" y="609" font-size="11" font-weight="normal" fill="#000" text-anchor="middle" stroke="#000" stroke-width="0.3" >24</text>
<text x="325.5" y="609" font-size="11" font-weight="normal" fill="#000" text-anchor="middle" stroke="#000" stroke-width="0.3" >31</text>
<text x="356.5" y="609" font-size="11" font-weight="normal" fill="#000" text-anchor="middle" stroke="#000" stroke-width="0.3" >07</text>
<text x="387.5" y="609" font-size="11" font-weight="normal" fill="#000" text-anchor="middle" stroke="#000" stroke-width="0.3" >14</text>
<text x="413.5" y="609" font-size="11" font-weight="normal" fill="#000" text-anchor="middle" stroke="#000" stroke-width="0.3" >21</text>
<text x="444.5" y="609" font-size="11" font-weight="normal" fill="#000" text-anchor="middle" stroke="#000" stroke-width="0.3" >28</text>
<text x="475.5" y="609" font-size="11" font-weight="normal" fill="#000" text-anchor="middle" stroke="#000" stroke-width="0.3" >05</text>
<text x="507.5" y="609" font-size="11" font-weight="normal" fill="#000" text-anchor="middle" stroke="#000" stroke-width="0.3" >12</text>
<text x="538.5" y="609" font-size="11" font-weight="normal" fill="#000" text-anchor="middle" stroke="#000" stroke-width="0.3" >19</text>
<text x="570.5" y="609" font-size="11" font-weight="normal" fill="#000" text-anchor="middle" stroke="#000" stroke-width="0.3" >26</text>
<text x="601.5" y="609" font-size="11" font-weight="normal" fill="#000" text-anchor="middle" stroke="#000" stroke-width="0.3" >02</text>
<text x="632.5" y="609" font-size="11" font-weight="normal" fill="#000" text-anchor="middle" stroke="#000" stroke-width="0.3" >09</text>
<text x="664.5" y="609" font-size="11" font-weight="normal" fill="#000" text-anchor="middle" stroke="#000" stroke-width="0.3" >16</text>
<text x="695.5" y="609" font-size="11" font-weight="normal" fill="#000" text-anchor="middle" stroke="#000" stroke-width="0.3" >23</text>
<text x="727.5" y="609" font-size="11" font-weight="normal" fill="#000" text-anchor="middle" stroke="#000" stroke-width="0.3" >30</text>
<text x="758.5" y="609" font-size="11" font-weight="normal" fill="#000" text-anchor="middle" stroke="#000" stroke-width="0.3" >07</text>
<text x="789.5" y="609" font-size="11" font-weight="normal" fill="#000" text-anchor="middle" stroke="#000" stroke-width="0.3" >14</text>
<text x="821.5" y="609" font-size="11" font-weight="normal" fill="#000" text-anchor="middle" stroke="#000" stroke-width="0.3" >21</text>
<text x="852.5" y="609" font-size="11" font-weight="normal" fill="#000" text-anchor="middle" stroke="#000" stroke-width="0.3" >28</text>
<text x="884.5" y="609" font-size="11" font-weight="normal" fill="#000" text-anchor="middle" stroke="#000" stroke-width="0.3" >04</text>
<text x="919.5" y="609" font-size="11" font-weight="normal" fill="#000" text-anchor="middle" stroke="#000" stroke-width="0.3" >11</text>
<text x="951.5" y="609" font-size="11" font-weight="normal" fill="#000" text-anchor="middle" stroke="#000" stroke-width="0.3" >18</text>
<text x="43.5" y="624" font-size="11" font-weight="normal" fill="#000" text-anchor="middle" stroke="#000" stroke-width="0.3" >Jan/27/14</text>
<text x="200.5" y="624" font-size="11" font-weight="normal" fill="#000" text-anchor="middle" stroke="#000" stroke-width="0.3" >Mar/03</text>
<text x="357.5" y="624" font-size="11" font-weight="normal" fill="#000" text-anchor="middle" stroke="#000" stroke-width="0.3" >Apr/07</text>
<text x="476.5" y="624" font-size="11" font-weight="normal" fill="#000" text-anchor="middle" stroke="#000" stroke-width="0.3" >May/05</text>
<text x="602.5" y="624" font-size="11" font-weight="normal" fill="#000" text-anchor="middle" stroke="#000" stroke-width="0.3" >Jun/02</text>
<text x="759.5" y="624" font-size="11" font-weight="normal" fill="#000" text-anchor="middle" stroke="#000" stroke-width="0.3" >Jul/07</text>
<text x="885.5" y="624" font-size="11" font-weight="normal" fill="#000" text-anchor="middle" stroke="#000" stroke-width="0.3" >Aug/04</text>
<rect x="12" y="641" width="12" height="12" fill="#8C9AAA" />
<rect x="13" y="642" width="10" height="10" fill="#3C6EA8" />
<rect x="26" y="638" width="1" height="19" fill="#8C8C8C" />
<rect x="30" y="636" width="150" height="22" fill="#A8A8B4" />
<rect x="31" y="637" width="148" height="20" fill="#FFFFFF" />
<rect x="31" y="637" width="17" height="20" fill="#F0F0F0" />
<g shape-rendering="geometricPrecision"><circle cx="39.7" cy="644.6" r="3.3" fill="none" stroke="#404040" stroke-width="1"/><path d="M37.4,647 L33.6,650.6" stroke="#303030" stroke-width="1.5"/></g>
<rect x="40" y="651" width="1" height="1" fill="#303030" />
<rect x="42" y="651" width="1" height="1" fill="#303030" />
<rect x="44" y="651" width="1" height="1" fill="#303030" />
<text x="51.5" y="651" font-size="11" font-weight="normal" fill="#6e6e76" textLength="103.5" lengthAdjust="spacingAndGlyphs" >Search for instrument</text>
<rect x="198" y="638" width="1" height="19" fill="#8C8C8C" />
<text x="202" y="652" font-size="12.8" font-weight="bold" fill="#0A0A14" textLength="145.5" lengthAdjust="spacingAndGlyphs" >04 Aug 2014 19:00:00 EDT</text>
</svg></body></html>
